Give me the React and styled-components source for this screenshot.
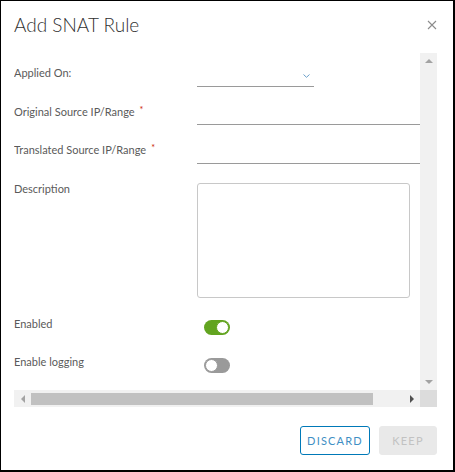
import React from 'react';
import styled, { createGlobalStyle } from 'styled-components';

const GlobalStyle = createGlobalStyle`
  html, body { margin: 0; padding: 0; background: #fff; }
  body { font-family: Lato, "Open Sans", "Liberation Sans", sans-serif; }
`;

const Modal = styled.div`
  width: 455px;
  height: 472px;
  box-sizing: border-box;
  border-style: solid;
  border-color: #000;
  border-width: 1px 2px 2px 1px;
  background: #fff;
  display: flex;
  flex-direction: column;
`;

const Header = styled.div`
  height: 52px;
  box-sizing: border-box;
  padding: 11px 16px 0 13px;
  display: flex;
  justify-content: space-between;
  align-items: flex-start;
`;

const Title = styled.h3`
  margin: 0;
  font-size: 19px;
  line-height: 26px;
  font-weight: 300;
  color: #313131;
`;

const CloseButton = styled.button`
  border: none;
  background: none;
  padding: 0;
  margin-top: 8px;
  width: 10px;
  height: 10px;
  display: flex;
  cursor: pointer;
`;

/* scroll frame: content + faked classic scrollbars */
const ScrollFrame = styled.div`
  margin: 0 16px 0 13px;
  display: grid;
  grid-template-columns: 406px 17px;
  grid-template-rows: 337px 17px;
`;

const Viewport = styled.div`
  overflow: hidden;
`;

const VBar = styled.div`
  background: #f1f1f1;
  display: flex;
  flex-direction: column;
  justify-content: space-between;
`;

const HBar = styled.div`
  background: #f1f1f1;
  display: flex;
  align-items: stretch;
`;

const Corner = styled.div`
  background: #dcdcdc;
`;

const ArrowButton = styled.div`
  width: 17px;
  height: 17px;
  flex: none;
  display: flex;
  align-items: center;
  justify-content: center;
`;

const Arrow = styled.span`
  width: 0;
  height: 0;
  border-style: solid;
  border-color: transparent;
  ${p => p.$dir === 'up' && `border-width: 0 4px 4px 4px; border-bottom-color: ${p.$color}; margin-top: -2px;`}
  ${p => p.$dir === 'down' && `border-width: 4px 4px 0 4px; border-top-color: ${p.$color}; margin-top: 1px;`}
  ${p => p.$dir === 'left' && `border-width: 4px 4px 4px 0; border-right-color: ${p.$color};`}
  ${p => p.$dir === 'right' && `border-width: 4px 0 4px 4px; border-left-color: ${p.$color};`}
`;

const Thumb = styled.div`
  width: 342px;
  margin: 3px 0 2px;
  background: #c1c1c1;
`;

const HTrack = styled.div`
  flex: 1;
`;

const Form = styled.div`
  width: 442px;
  padding-top: 13px;
`;

const Row = styled.div`
  display: flex;
  align-items: flex-start;
  height: ${p => p.$h}px;
`;

const Label = styled.label`
  width: 183px;
  flex: none;
  font-size: 11px;
  line-height: 14px;
  color: #5a5a5a;
  white-space: nowrap;
`;

const Required = styled.span`
  color: #c92100;
  font-size: 9px;
  vertical-align: top;
  margin-left: 5px;
  line-height: 10px;
`;

const Select = styled.div`
  width: 117px;
  height: 21px;
  box-sizing: border-box;
  border-bottom: 1px solid #9a9a9a;
  display: flex;
  justify-content: flex-end;
  padding: 8px 4px 0 0;
`;

const Input = styled.input`
  width: 245px;
  height: ${p => p.$h}px;
  box-sizing: border-box;
  border: none;
  border-bottom: 1px solid #9a9a9a;
  padding: 0;
  outline: none;
  background: transparent;
`;

const TextArea = styled.textarea`
  width: 213px;
  height: 115px;
  margin-top: 1px;
  box-sizing: border-box;
  border: 1px solid #c8c8c8;
  border-radius: 3px;
  resize: none;
  outline: none;
`;

const Toggle = styled.span`
  margin: 3px 0 0 7px;
  width: 26px;
  height: 15px;
  box-sizing: border-box;
  border-radius: 8px;
  background: ${p => (p.$on ? '#62a420' : '#9a9a9a')};
  display: flex;
  align-items: center;
  justify-content: ${p => (p.$on ? 'flex-end' : 'flex-start')};
  padding: 0 1px;
`;

const Knob = styled.span`
  width: 13px;
  height: 13px;
  box-sizing: border-box;
  border-radius: 50%;
  background: #fff;
  border: 1px solid ${p => (p.$on ? '#62a420' : '#9a9a9a')};
`;

const Footer = styled.div`
  flex: 1;
  display: flex;
  justify-content: flex-end;
  align-items: flex-start;
  gap: 9px;
  padding: 19px 16px 0 0;
`;

const Button = styled.button`
  height: 29px;
  width: ${p => p.$w}px;
  box-sizing: border-box;
  border-radius: 3px;
  font-family: Lato, "Liberation Sans", sans-serif;
  font-size: 11px;
  font-weight: 400;
  letter-spacing: 1.2px;
  padding: 0;
  border: 1px solid ${p => (p.$disabled ? '#e9e9e9' : '#0079b8')};
  background: ${p => (p.$disabled ? '#e9e9e9' : '#fff')};
  color: ${p => (p.$disabled ? '#c2c2c2' : '#3f8fc4')};
`;

export default function App() {
  return (
    <>
      <GlobalStyle />
      <Modal>
        <Header>
          <Title>Add SNAT Rule</Title>
          <CloseButton aria-label="Close">
            <svg width="10" height="10" viewBox="0 0 10 10">
              <path d="M1 1L9 9M9 1L1 9" stroke="#8c8c8c" strokeWidth="1.1" />
            </svg>
          </CloseButton>
        </Header>
        <ScrollFrame>
          <Viewport>
            <Form>
              <Row $h={39}>
                <Label>Applied On:</Label>
                <Select>
                  <svg width="7" height="4" viewBox="0 0 7 4">
                    <path d="M0.5 0.5L3.5 3.3L6.5 0.5" fill="none" stroke="#6a9fc9" strokeWidth="1" />
                  </svg>
                </Select>
              </Row>
              <Row $h={38}>
                <Label>Original Source IP/Range<Required>*</Required></Label>
                <Input $h={20} />
              </Row>
              <Row $h={39}>
                <Label>Translated Source IP/Range<Required>*</Required></Label>
                <Input $h={21} />
              </Row>
              <Row $h={135}>
                <Label>Description</Label>
                <TextArea />
              </Row>
              <Row $h={38}>
                <Label>Enabled</Label>
                <Toggle $on><Knob $on /></Toggle>
              </Row>
              <Row $h={30}>
                <Label>Enable logging</Label>
                <Toggle><Knob /></Toggle>
              </Row>
            </Form>
          </Viewport>
          <VBar>
            <ArrowButton><Arrow $dir="up" $color="#a3a3a3" /></ArrowButton>
            <ArrowButton><Arrow $dir="down" $color="#a3a3a3" /></ArrowButton>
          </VBar>
          <HBar>
            <ArrowButton><Arrow $dir="left" $color="#a3a3a3" /></ArrowButton>
            <Thumb />
            <HTrack />
            <ArrowButton><Arrow $dir="right" $color="#505050" /></ArrowButton>
          </HBar>
          <Corner />
        </ScrollFrame>
        <Footer>
          <Button $w={70}>DISCARD</Button>
          <Button $w={58} $disabled>KEEP</Button>
        </Footer>
      </Modal>
    </>
  );
}
